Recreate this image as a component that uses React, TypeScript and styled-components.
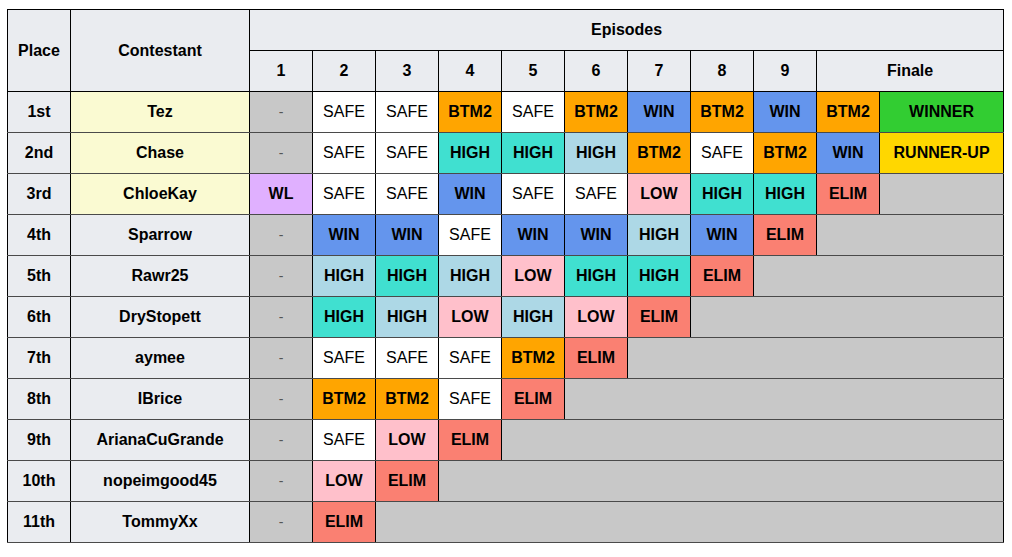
import React from "react";
import styled, { createGlobalStyle } from "styled-components";

const Global = createGlobalStyle`
  html, body { margin: 0; padding: 0; background: #fff; }
  body { font-family: "Liberation Sans", Arial, sans-serif; }
`;

const Page = styled.div`
  padding: 9px 0 0 7px;
`;

const Table = styled.table`
  border-collapse: collapse;
  table-layout: fixed;
  width: 997px;
  font-family: "Liberation Sans", Arial, sans-serif;
  font-size: 16px;
  color: #000;
`;

const Row = styled.tr`
  height: 41px;
`;

const HeadCell = styled.th`
  background: #eaecf0;
  border: 1px solid #000;
  font-weight: bold;
  text-align: center;
  padding: 0;
  height: 40px;
`;

const PlaceCell = styled.td`
  background: #eaecf0;
  border-left: 1px solid #000;
  border-right: 1px solid #000;
  border-top: 1px solid #4a4a4a;
  border-bottom: 1px solid #4a4a4a;
  font-weight: bold;
  text-align: center;
  padding: 0;
`;

const NameCell = styled(PlaceCell)<{ $top: boolean }>`
  background: ${(p) => (p.$top ? "#fafad2" : "#eaecf0")};
`;

const ResultCell = styled.td<{ $bg: string; $bold: boolean; $dash?: boolean }>`
  background: ${(p) => p.$bg};
  border-left: 1px solid #000;
  border-right: 1px solid #000;
  border-top: 1px solid #4a4a4a;
  border-bottom: 1px solid #4a4a4a;
  font-weight: ${(p) => (p.$bold ? "bold" : "normal")};
  color: ${(p) => (p.$dash ? "#555" : "#000")};
  font-size: ${(p) => (p.$dash ? "14px" : "16px")};
  text-align: center;
  padding: 0;
`;

const EmptyCell = styled.td`
  background: #c8c8c8;
  border: 1px solid #000;
  border-top-color: #4a4a4a;
  border-bottom-color: #4a4a4a;
  padding: 0;
`;

type Key =
  | "-"
  | "WL"
  | "SAFE"
  | "BTM2"
  | "WIN"
  | "HIGH"
  | "HIGHB"
  | "LOW"
  | "ELIM"
  | "WINNER"
  | "RUNNER-UP";

const styles: Record<Key, { bg: string; label: string; bold: boolean }> = {
  "-": { bg: "#c8c8c8", label: "-", bold: false },
  WL: { bg: "#e0b0ff", label: "WL", bold: true },
  SAFE: { bg: "#ffffff", label: "SAFE", bold: false },
  BTM2: { bg: "#ffa500", label: "BTM2", bold: true },
  WIN: { bg: "#6495ed", label: "WIN", bold: true },
  HIGH: { bg: "#40e0d0", label: "HIGH", bold: true },
  HIGHB: { bg: "#add8e6", label: "HIGH", bold: true },
  LOW: { bg: "#ffc0cb", label: "LOW", bold: true },
  ELIM: { bg: "#fa8072", label: "ELIM", bold: true },
  WINNER: { bg: "#32cd32", label: "WINNER", bold: true },
  "RUNNER-UP": { bg: "#ffd700", label: "RUNNER-UP", bold: true },
};

const data: { place: string; name: string; results: Key[] }[] = [
  { place: "1st", name: "Tez", results: ["-", "SAFE", "SAFE", "BTM2", "SAFE", "BTM2", "WIN", "BTM2", "WIN", "BTM2", "WINNER"] },
  { place: "2nd", name: "Chase", results: ["-", "SAFE", "SAFE", "HIGH", "HIGH", "HIGHB", "BTM2", "SAFE", "BTM2", "WIN", "RUNNER-UP"] },
  { place: "3rd", name: "ChloeKay", results: ["WL", "SAFE", "SAFE", "WIN", "SAFE", "SAFE", "LOW", "HIGH", "HIGH", "ELIM"] },
  { place: "4th", name: "Sparrow", results: ["-", "WIN", "WIN", "SAFE", "WIN", "WIN", "HIGHB", "WIN", "ELIM"] },
  { place: "5th", name: "Rawr25", results: ["-", "HIGHB", "HIGH", "HIGHB", "LOW", "HIGH", "HIGH", "ELIM"] },
  { place: "6th", name: "DryStopett", results: ["-", "HIGH", "HIGHB", "LOW", "HIGHB", "LOW", "ELIM"] },
  { place: "7th", name: "aymee", results: ["-", "SAFE", "SAFE", "SAFE", "BTM2", "ELIM"] },
  { place: "8th", name: "IBrice", results: ["-", "BTM2", "BTM2", "SAFE", "ELIM"] },
  { place: "9th", name: "ArianaCuGrande", results: ["-", "SAFE", "LOW", "ELIM"] },
  { place: "10th", name: "nopeimgood45", results: ["-", "LOW", "ELIM"] },
  { place: "11th", name: "TommyXx", results: ["-", "ELIM"] },
];

const TOTAL = 11;

export default function App() {
  return (
    <Page>
      <Global />
      <Table>
        <colgroup>
          <col style={{ width: 63 }} />
          <col style={{ width: 179 }} />
          {Array.from({ length: 10 }).map((_, i) => (
            <col key={i} style={{ width: 63 }} />
          ))}
          <col style={{ width: 124 }} />
        </colgroup>
        <thead>
          <Row>
            <HeadCell rowSpan={2}>Place</HeadCell>
            <HeadCell rowSpan={2}>Contestant</HeadCell>
            <HeadCell colSpan={11}>Episodes</HeadCell>
          </Row>
          <Row>
            {[1, 2, 3, 4, 5, 6, 7, 8, 9].map((n) => (
              <HeadCell key={n}>{n}</HeadCell>
            ))}
            <HeadCell colSpan={2}>Finale</HeadCell>
          </Row>
        </thead>
        <tbody>
          {data.map((r, i) => (
            <Row key={r.place}>
              <PlaceCell>{r.place}</PlaceCell>
              <NameCell $top={i < 3}>{r.name}</NameCell>
              {r.results.map((k, j) => {
                const s = styles[k];
                return (
                  <ResultCell key={j} $bg={s.bg} $bold={s.bold} $dash={k === "-"}>
                    {s.label}
                  </ResultCell>
                );
              })}
              {r.results.length < TOTAL && <EmptyCell colSpan={TOTAL - r.results.length} />}
            </Row>
          ))}
        </tbody>
      </Table>
    </Page>
  );
}
